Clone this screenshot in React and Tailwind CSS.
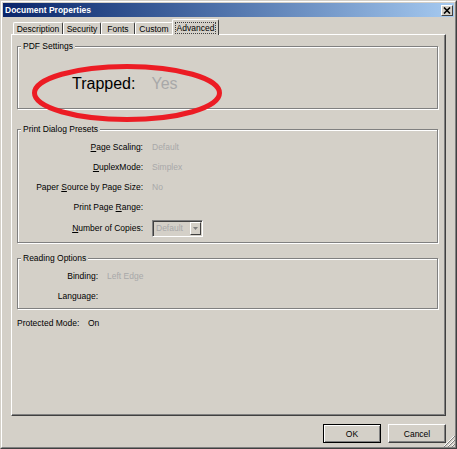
import React from 'react';

const TABS = [
  { id: 'description', label: 'Description', width: 'w-[50px]' },
  { id: 'security', label: 'Security', width: 'w-[38px]' },
  { id: 'fonts', label: 'Fonts', width: 'w-[34px]' },
  { id: 'custom', label: 'Custom', width: 'w-[38px]' },
  { id: 'advanced', label: 'Advanced', width: 'w-[47px]' },
];

const PRINT_ROWS = [
  { label: <><u>P</u>age Scaling:</>, value: 'Default' },
  { label: <><u>D</u>uplexMode:</>, value: 'Simplex' },
  { label: <>Paper <u>S</u>ource by Page Size:</>, value: 'No' },
  { label: <>Print Page <u>R</u>ange:</>, value: '' },
];

const GroupBox = ({ title, className = '', children }) => (
  <fieldset
    className={`relative border border-[#808080] shadow-[inset_1px_1px_0_#ffffff,1px_1px_0_#ffffff] ${className}`}
  >
    <legend className="ml-[3px] px-[2px] bg-[#d4d0c8] leading-[10px]">{title}</legend>
    {children}
  </fieldset>
);

const Button = ({ children, isDefault }) => (
  <button
    className={`w-[58px] h-[19px] bg-[#d4d0c8] border ${
      isDefault
        ? 'border-black shadow-[inset_1px_1px_0_#ffffff,inset_-1px_-1px_0_#808080]'
        : 'border-t-white border-l-white border-r-[#404040] border-b-[#404040] shadow-[inset_-1px_-1px_0_#808080]'
    } text-black`}
  >
    {children}
  </button>
);

export default function App() {
  return (
    <div className="relative w-[457px] h-[449px] overflow-hidden bg-[#d4d0c8] border border-t-[#d4d0c8] border-l-[#d4d0c8] border-r-[#404040] border-b-[#404040] font-['Liberation_Sans',Arial,sans-serif] text-[8.5px] leading-[10px] text-black">
      <div className="h-full border border-t-white border-l-white border-r-[#808080] border-b-[#808080] p-px flex flex-col">
        {/* Title bar */}
        <div className="h-[14px] flex items-center justify-between pl-[2px] pr-[1px] bg-gradient-to-r from-[#0a246a] to-[#a6caf0]">
          <span className="text-white font-bold">Document Properties</span>
          <button className="w-[12px] h-[11px] flex items-center justify-center bg-[#d4d0c8] border border-t-white border-l-white border-r-[#404040] border-b-[#404040]">
            <svg width="8" height="7" viewBox="0 0 8 7">
              <path d="M1 0.5 L7 6.5 M7 0.5 L1 6.5" stroke="#000" strokeWidth="1.6" />
            </svg>
          </button>
        </div>

        {/* Tabs */}
        <div className="mt-[2px] h-[15px] pl-[10px] flex items-end">
          {TABS.map((tab) => {
            const isSelected = tab.id === 'advanced';
            return (
              <div
                key={tab.id}
                className={`${tab.width} flex items-center justify-center bg-[#d4d0c8] border-l border-t border-r border-l-white border-t-white border-r-[#404040] rounded-t-[2px] ${
                  isSelected ? 'h-[16px] -mb-px relative z-10 -ml-px' : 'h-[12px]'
                }`}
              >
                <span className={isSelected ? 'px-[1px] outline outline-1 outline-dotted outline-[#404040]' : ''}>
                  {tab.label}
                </span>
              </div>
            );
          })}
        </div>

        {/* Tab panel */}
        <div className="ml-[8px] w-[435px] h-[382px] border border-t-white border-l-white border-r-[#404040] border-b-[#404040] shadow-[inset_-1px_-1px_0_#808080] pt-[6px] px-[5px]">
          <GroupBox title="PDF Settings" className="w-[421px] h-[68px]">
            <div className="pt-[24px] pl-[54px] flex items-center gap-[16px] text-[16px] leading-[18px]">
              <span>Trapped:</span>
              <span className="text-[#a8a8a8]">Yes</span>
            </div>
            <svg
              className="absolute left-[14px] top-[13px] overflow-visible"
              width="190"
              height="58"
              viewBox="0 0 190 58"
            >
              <ellipse cx="95" cy="29" rx="92.5" ry="26.5" fill="none" stroke="#ec1c24" strokeWidth="5" />
            </svg>
          </GroupBox>

          <GroupBox title="Print Dialog Presets" className="mt-[15px] w-[421px] h-[119px]">
            <div className="pt-[3px] flex flex-col">
              {PRINT_ROWS.map((row, i) => (
                <div key={i} className="h-[20px] flex items-center gap-[9px]">
                  <span className="w-[125px] text-right">{row.label}</span>
                  <span className="text-[#a8a8a8]">{row.value}</span>
                </div>
              ))}
              <div className="h-[22px] flex items-center gap-[9px]">
                <span className="w-[125px] text-right">
                  <u>N</u>umber of Copies:
                </span>
                <div className="w-[51px] h-[17px] flex items-center border border-t-[#808080] border-l-[#808080] border-r-white border-b-white shadow-[inset_1px_1px_0_#404040]">
                  <span className="flex-1 pl-[3px] text-[#a8a8a8]">Default</span>
                  <div className="w-[11px] h-[13px] mr-px flex items-center justify-center border border-t-white border-l-white border-r-[#404040] border-b-[#404040]">
                    <svg width="5" height="3" viewBox="0 0 5 3">
                      <path d="M0 0 H5 L2.5 3 Z" fill="#808080" />
                    </svg>
                  </div>
                </div>
              </div>
            </div>
          </GroupBox>

          <GroupBox title="Reading Options" className="mt-[10px] w-[421px] h-[56px]">
            <div className="pt-[3px] flex flex-col">
              <div className="h-[20px] flex items-center gap-[9px]">
                <span className="w-[80px] text-right">Binding:</span>
                <span className="text-[#a8a8a8]">Left Edge</span>
              </div>
              <div className="h-[20px] flex items-center gap-[9px]">
                <span className="w-[80px] text-right">Language:</span>
              </div>
            </div>
          </GroupBox>

          <div className="mt-[9px] flex items-center">
            <span className="w-[71px]">Protected Mode:</span>
            <span>On</span>
          </div>
        </div>

        {/* Buttons */}
        <div className="mt-[8px] pr-[8px] flex justify-end gap-[7px]">
          <Button isDefault>OK</Button>
          <Button>Cancel</Button>
        </div>
      </div>

      {/* Size grip */}
      <svg className="absolute right-[1px] bottom-[1px]" width="12" height="12" viewBox="0 0 12 12">
        <path d="M11 1 L1 11 M11 5 L5 11 M11 9 L9 11" stroke="#ffffff" strokeWidth="1" />
        <path d="M12 1 L1 12 M12 5 L5 12 M12 9 L9 12" stroke="#808080" strokeWidth="1" />
      </svg>
    </div>
  );
}
